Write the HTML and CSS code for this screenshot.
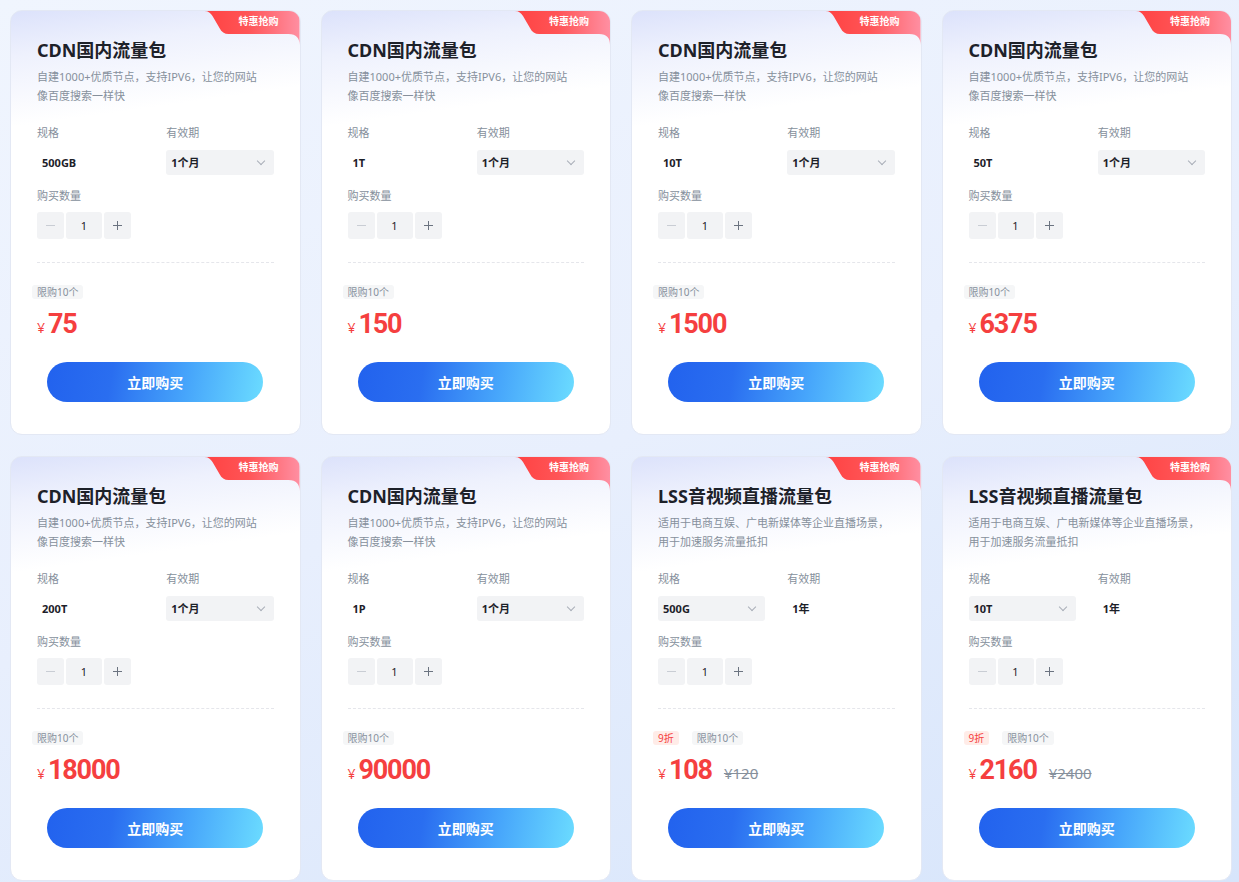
FILE: index.html
```html
<!DOCTYPE html>
<html>
<head>
	<meta charset="UTF-8">
	<title>流量包</title>
	<link rel="stylesheet" href="styles.css">
</head>
<body>
	<div class="pkg-list">
		<div class="pkg-card">
			<div class="hot">特惠抢购</div>
			<h3>CDN国内流量包</h3>
			<p class="desc">自建1000+优质节点，支持IPV6，让您的网站<br>像百度搜索一样快</p>
			<div class="fields">
				<div class="field"><label>规格</label><div class="value">500GB</div></div>
				<div class="field"><label>有效期</label><div class="value select">1个月<i class="arrow"></i></div></div>
			</div>
			<div class="field qty"><label>购买数量</label>
				<div class="stepper"><span class="minus"></span><span class="num">1</span><span class="plus"></span></div>
			</div>
			<div class="divider"></div>
			<div class="tags"><span class="tag">限购10个</span></div>
			<div class="price"><span class="cur">¥</span><b>75</b></div>
			<button class="buy">立即购买</button>
		</div>
		<div class="pkg-card">
			<div class="hot">特惠抢购</div>
			<h3>CDN国内流量包</h3>
			<p class="desc">自建1000+优质节点，支持IPV6，让您的网站<br>像百度搜索一样快</p>
			<div class="fields">
				<div class="field"><label>规格</label><div class="value">1T</div></div>
				<div class="field"><label>有效期</label><div class="value select">1个月<i class="arrow"></i></div></div>
			</div>
			<div class="field qty"><label>购买数量</label>
				<div class="stepper"><span class="minus"></span><span class="num">1</span><span class="plus"></span></div>
			</div>
			<div class="divider"></div>
			<div class="tags"><span class="tag">限购10个</span></div>
			<div class="price"><span class="cur">¥</span><b>150</b></div>
			<button class="buy">立即购买</button>
		</div>
		<div class="pkg-card">
			<div class="hot">特惠抢购</div>
			<h3>CDN国内流量包</h3>
			<p class="desc">自建1000+优质节点，支持IPV6，让您的网站<br>像百度搜索一样快</p>
			<div class="fields">
				<div class="field"><label>规格</label><div class="value">10T</div></div>
				<div class="field"><label>有效期</label><div class="value select">1个月<i class="arrow"></i></div></div>
			</div>
			<div class="field qty"><label>购买数量</label>
				<div class="stepper"><span class="minus"></span><span class="num">1</span><span class="plus"></span></div>
			</div>
			<div class="divider"></div>
			<div class="tags"><span class="tag">限购10个</span></div>
			<div class="price"><span class="cur">¥</span><b>1500</b></div>
			<button class="buy">立即购买</button>
		</div>
		<div class="pkg-card">
			<div class="hot">特惠抢购</div>
			<h3>CDN国内流量包</h3>
			<p class="desc">自建1000+优质节点，支持IPV6，让您的网站<br>像百度搜索一样快</p>
			<div class="fields">
				<div class="field"><label>规格</label><div class="value">50T</div></div>
				<div class="field"><label>有效期</label><div class="value select">1个月<i class="arrow"></i></div></div>
			</div>
			<div class="field qty"><label>购买数量</label>
				<div class="stepper"><span class="minus"></span><span class="num">1</span><span class="plus"></span></div>
			</div>
			<div class="divider"></div>
			<div class="tags"><span class="tag">限购10个</span></div>
			<div class="price"><span class="cur">¥</span><b>6375</b></div>
			<button class="buy">立即购买</button>
		</div>
		<div class="pkg-card">
			<div class="hot">特惠抢购</div>
			<h3>CDN国内流量包</h3>
			<p class="desc">自建1000+优质节点，支持IPV6，让您的网站<br>像百度搜索一样快</p>
			<div class="fields">
				<div class="field"><label>规格</label><div class="value">200T</div></div>
				<div class="field"><label>有效期</label><div class="value select">1个月<i class="arrow"></i></div></div>
			</div>
			<div class="field qty"><label>购买数量</label>
				<div class="stepper"><span class="minus"></span><span class="num">1</span><span class="plus"></span></div>
			</div>
			<div class="divider"></div>
			<div class="tags"><span class="tag">限购10个</span></div>
			<div class="price"><span class="cur">¥</span><b>18000</b></div>
			<button class="buy">立即购买</button>
		</div>
		<div class="pkg-card">
			<div class="hot">特惠抢购</div>
			<h3>CDN国内流量包</h3>
			<p class="desc">自建1000+优质节点，支持IPV6，让您的网站<br>像百度搜索一样快</p>
			<div class="fields">
				<div class="field"><label>规格</label><div class="value">1P</div></div>
				<div class="field"><label>有效期</label><div class="value select">1个月<i class="arrow"></i></div></div>
			</div>
			<div class="field qty"><label>购买数量</label>
				<div class="stepper"><span class="minus"></span><span class="num">1</span><span class="plus"></span></div>
			</div>
			<div class="divider"></div>
			<div class="tags"><span class="tag">限购10个</span></div>
			<div class="price"><span class="cur">¥</span><b>90000</b></div>
			<button class="buy">立即购买</button>
		</div>
		<div class="pkg-card">
			<div class="hot">特惠抢购</div>
			<h3>LSS音视频直播流量包</h3>
			<p class="desc">适用于电商互娱、广电新媒体等企业直播场景，<br>用于加速服务流量抵扣</p>
			<div class="fields">
				<div class="field"><label>规格</label><div class="value select">500G<i class="arrow"></i></div></div>
				<div class="field"><label>有效期</label><div class="value">1年</div></div>
			</div>
			<div class="field qty"><label>购买数量</label>
				<div class="stepper"><span class="minus"></span><span class="num">1</span><span class="plus"></span></div>
			</div>
			<div class="divider"></div>
			<div class="tags"><span class="tag off">9折</span><span class="tag">限购10个</span></div>
			<div class="price"><span class="cur">¥</span><b>108</b><del>¥120</del></div>
			<button class="buy">立即购买</button>
		</div>
		<div class="pkg-card">
			<div class="hot">特惠抢购</div>
			<h3>LSS音视频直播流量包</h3>
			<p class="desc">适用于电商互娱、广电新媒体等企业直播场景，<br>用于加速服务流量抵扣</p>
			<div class="fields">
				<div class="field"><label>规格</label><div class="value select">10T<i class="arrow"></i></div></div>
				<div class="field"><label>有效期</label><div class="value">1年</div></div>
			</div>
			<div class="field qty"><label>购买数量</label>
				<div class="stepper"><span class="minus"></span><span class="num">1</span><span class="plus"></span></div>
			</div>
			<div class="divider"></div>
			<div class="tags"><span class="tag off">9折</span><span class="tag">限购10个</span></div>
			<div class="price"><span class="cur">¥</span><b>2160</b><del>¥2400</del></div>
			<button class="buy">立即购买</button>
		</div>
	</div>
</body>
</html>
```
FILE: styles.css
```css
	*{
		box-sizing:border-box;
	}
	html,body{
		margin:0;
		height:100%;
	}
	body{
		font-family:"Noto Sans","Noto Sans CJK SC",sans-serif;
		background:linear-gradient(160deg,#f0f5fe 0%,#e8effd 50%,#d7e5fb 100%);
		overflow:hidden;
	}
	.pkg-list{
		display:grid;
		grid-template-columns:repeat(4,1fr);
		gap:21px 20px;
		padding:10px 7px 0 10px;
	}
	.pkg-card{
		position:relative;
		display:flex;
		flex-direction:column;
		height:425px;
		padding:27px 26px 0;
		overflow:hidden;
		background:linear-gradient(172deg,#dce2fb 0,#eef1fd 45px,#fff 115px);
		border:1px solid #e3e8f4;
		border-radius:12px;
	}
	.pkg-card .hot{
		position:absolute;
		top:0;
		right:0;
		width:95px;
		height:34px;
		padding:0 0 0 13px;
		font-size:10px;
		font-weight:700;
		line-height:21px;
		text-align:center;
		color:#fff;
		background:linear-gradient(to right,#ff4242,#ff5456 45%,#ff8fa2);
		clip-path:path('M0,0 H95 V34 C95,27 92,23 84,23 H24 C20,23 17,21 15,17 L8,5 C6,2 4,0 0,0 Z');
	}
	.pkg-card h3{
		margin:0;
		font-size:18px;
		line-height:24px;
		font-weight:700;
		color:#1d2129;
	}
	.desc{
		margin:5px 0 0;
		font-size:11px;
		line-height:19px;
		color:#86909c;
	}
	.fields{
		display:grid;
		grid-template-columns:1fr 1fr;
		column-gap:22px;
		margin-top:20px;
	}
	.field label{
		display:block;
		margin-bottom:9px;
		font-size:11px;
		line-height:16px;
		color:#86909c;
	}
	.value{
		height:25px;
		padding:0 5px;
		font-size:11px;
		font-weight:700;
		line-height:25px;
		color:#1d2129;
	}
	.select{
		display:flex;
		align-items:center;
		justify-content:space-between;
		background:#f2f3f5;
		border-radius:3px;
	}
	.arrow{
		width:6px;
		height:6px;
		margin:-3px 5px 0 0;
		border-right:1px solid #a9aeb8;
		border-bottom:1px solid #a9aeb8;
		transform:rotate(45deg);
	}
	.qty{
		margin-top:13px;
	}
	.qty label{
		margin-bottom:8px;
	}
	.stepper{
		display:flex;
		gap:2px;
	}
	.stepper span{
		position:relative;
		display:flex;
		align-items:center;
		justify-content:center;
		width:27px;
		height:27px;
		background:#f2f3f5;
		border-radius:3px;
		font-size:11px;
		color:#1d2129;
	}
	.stepper .num{
		width:36px;
	}
	.stepper .minus:before,
	.stepper .plus:before,
	.stepper .plus:after{
		content:'';
		position:absolute;
		top:13px;
		left:9px;
		width:9px;
		height:1px;
		background:#c9cdd4;
	}
	.stepper .plus:before,
	.stepper .plus:after{
		background:#6b7380;
	}
	.stepper .plus:after{
		transform:rotate(90deg);
	}
	.divider{
		margin-top:23px;
		border-top:1px dashed #e5e6eb;
	}
	.tags{
		display:flex;
		gap:13px;
		margin:22px 0 0 -5px;
	}
	.tag{
		padding:0 5px;
		font-size:10px;
		line-height:14px;
		color:#86909c;
		background:#f5f6f7;
		border-radius:3px;
	}
	.tag.off{
		color:#f53f3f;
		background:#ffece8;
	}
	.price{
		display:flex;
		align-items:baseline;
		margin-top:10px;
		line-height:30px;
		color:#f53f3f;
	}
	.price .cur{
		margin-right:3px;
		font-size:14px;
	}
	.price b{
		font-family:Roboto,sans-serif;
		font-size:27px;
		letter-spacing:-1.2px;
	}
	.price del{
		margin-left:12px;
		font-size:15px;
		color:#86909c;
	}
	.buy{
		align-self:center;
		width:216px;
		height:40px;
		margin-top:19px;
		border:0;
		border-radius:20px;
		font-family:inherit;
		font-size:14px;
		font-weight:700;
		color:#fff;
		background:linear-gradient(100deg,#2262ee 0%,#2a6ef0 30%,#47a6fb 65%,#6bdcff 100%);
	}
```
